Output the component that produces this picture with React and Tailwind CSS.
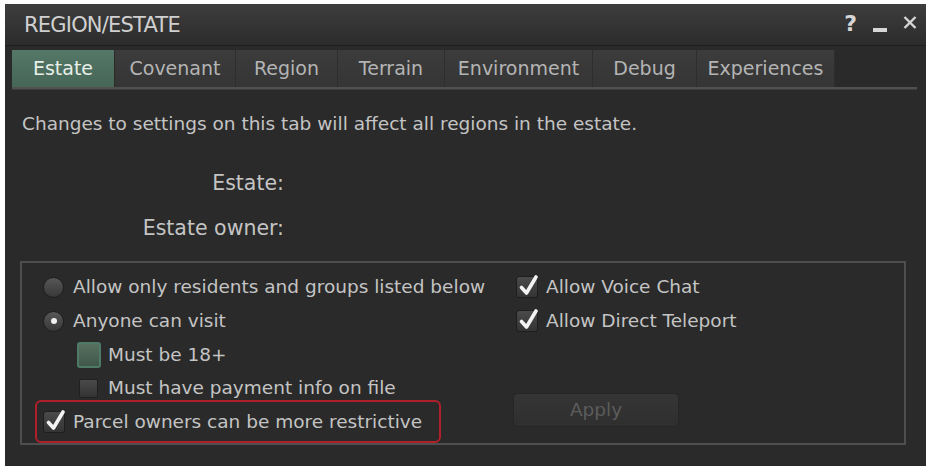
import React from "react";

const font = { fontFamily: '"DejaVu Sans", "Liberation Sans", sans-serif' };

function Check({ checked }) {
  return (
    <div className="relative w-[22px] h-[22px] rounded-[3px] bg-gradient-to-b from-[#4a4a4a] to-[#343434] border border-[#1e1e1e] shrink-0">
      {checked && (
        <svg className="absolute left-[2px] top-[-3px]" width="20" height="23" viewBox="0 0 20 23">
          <path d="M2.5 13.5 L7.5 19 L17 3" fill="none" stroke="#f2f2f2" strokeWidth="3.6" strokeLinecap="round" strokeLinejoin="round" />
        </svg>
      )}
    </div>
  );
}

function Radio({ selected }) {
  return (
    <div className="relative w-[21px] h-[21px] rounded-full bg-gradient-to-b from-[#585858] to-[#383838] border border-[#1e1e1e] shrink-0 flex items-center justify-center">
      {selected && <div className="w-[6px] h-[6px] rounded-full bg-[#f0f0f0]" />}
    </div>
  );
}

export default function App() {
  const tabs = [
    ["Estate", 103],
    ["Covenant", 121],
    ["Region", 102],
    ["Terrain", 107],
    ["Environment", 148],
    ["Debug", 104],
    ["Experiences", 138],
  ];
  return (
    <div className="w-[929px] h-[469px] bg-white pt-[4px] pl-[5px]" style={font}>
      <div className="w-[921px] h-[462px] bg-[#2a2a2a] flex flex-col">
        {/* title bar */}
        <div className="h-[42px] shrink-0 bg-gradient-to-b from-[#3d3d3d] to-[#2c2c2c] flex items-center pl-[19px] pr-[9px] border-b border-[#1f1f1f]">
          <span className="text-[#d0d0d0] text-[21px] tracking-[-0.8px] leading-none pt-[2px]">REGION/ESTATE</span>
          <div className="ml-auto flex items-center text-[#d6d6d6]">
            <span className="text-[22px] font-bold leading-none mr-[16px] mb-[1px]">?</span>
            <div className="w-[14px] h-[4px] bg-[#d6d6d6] mt-[10px] mr-[16px]" />
            <svg width="14" height="13" viewBox="0 0 14 13" className="mb-[4px]">
              <path d="M1.5 1 L12.5 12 M12.5 1 L1.5 12" stroke="#d6d6d6" strokeWidth="2.4" />
            </svg>
          </div>
        </div>
        {/* tabs */}
        <div className="px-[7px] pt-[4px] shrink-0">
          <div className="flex h-[37px]">
            {tabs.map(([t, w], i) => (
              <div
                key={t}
                style={{ width: w }}
                className={
                  i === 0
                    ? "flex items-center justify-center bg-gradient-to-b from-[#557868] to-[#466656] text-[#e8efe9] text-[19px] border-r border-[#2a2a2a]"
                    : "flex items-center justify-center bg-gradient-to-b from-[#3c3c3c] to-[#353535] text-[#b4b4b4] text-[19px] border-r border-[#2e2e2e]"
                }
              >
                {t}
              </div>
            ))}
          </div>
          <div className="h-[3px] bg-[#505050] mr-[2px] border-b border-[#3c3c3c]" />
        </div>
        {/* body */}
        <div className="px-[17px] pt-[23px] text-[#c4c4c4] shrink-0">
          <div className="leading-[22px] text-[18.5px]">Changes to settings on this tab will affect all regions in the estate.</div>
          <div className="flex flex-col gap-[21px] mt-[36px] text-[20.5px]">
            <div className="flex">
              <div className="w-[262px] text-right leading-[24px]">Estate:</div>
            </div>
            <div className="flex">
              <div className="w-[262px] text-right leading-[24px]">Estate owner:</div>
            </div>
          </div>
        </div>
        {/* group box */}
        <div className="mt-[21px] ml-[15px] w-[886px] h-[184px] shrink-0 border-2 border-[#4e4e4e] flex text-[#c4c4c4] text-[18.5px]">
          <div className="w-[494px] pl-[21px] pt-[13px] flex flex-col">
            <div className="flex items-center gap-[9px] h-[22px]">
              <Radio />
              <span>Allow only residents and groups listed below</span>
            </div>
            <div className="flex items-center gap-[9px] h-[22px] mt-[12px]">
              <Radio selected />
              <span>Anyone can visit</span>
            </div>
            <div className="flex items-center gap-[7px] h-[26px] mt-[10px] ml-[34px]">
              <div className="w-[24px] h-[26px] rounded-[3px] border-2 border-[#4f7a68] bg-gradient-to-b from-[#56705f] to-[#40584b]" />
              <span>Must be 18+</span>
            </div>
            <div className="flex items-center gap-[10px] h-[20px] mt-[10px] ml-[36px]">
              <div className="w-[19px] h-[19px] rounded-[2px] bg-gradient-to-b from-[#4a4a4a] to-[#333] border border-[#202020]" />
              <span>Must have payment info on file</span>
            </div>
            <div className="mt-[2px] -ml-[8px] w-[406px] h-[43px] rounded-[6px] border-2 border-[#b0202a] flex items-center pl-[6px] gap-[8px]">
              <Check checked />
              <span>Parcel owners can be more restrictive</span>
            </div>
          </div>
          <div className="pt-[13px] flex flex-col">
            <div className="flex items-center gap-[8px] h-[22px]">
              <Check checked />
              <span>Allow Voice Chat</span>
            </div>
            <div className="flex items-center gap-[8px] h-[22px] mt-[12px]">
              <Check checked />
              <span>Allow Direct Teleport</span>
            </div>
            <div className="mt-[61px] -ml-[3px] w-[166px] h-[34px] rounded-[4px] bg-gradient-to-b from-[#353535] to-[#2f2f2f] border border-[#262626] flex items-center justify-center text-[#5c5c5c]">
              Apply
            </div>
          </div>
        </div>
      </div>
    </div>
  );
}
